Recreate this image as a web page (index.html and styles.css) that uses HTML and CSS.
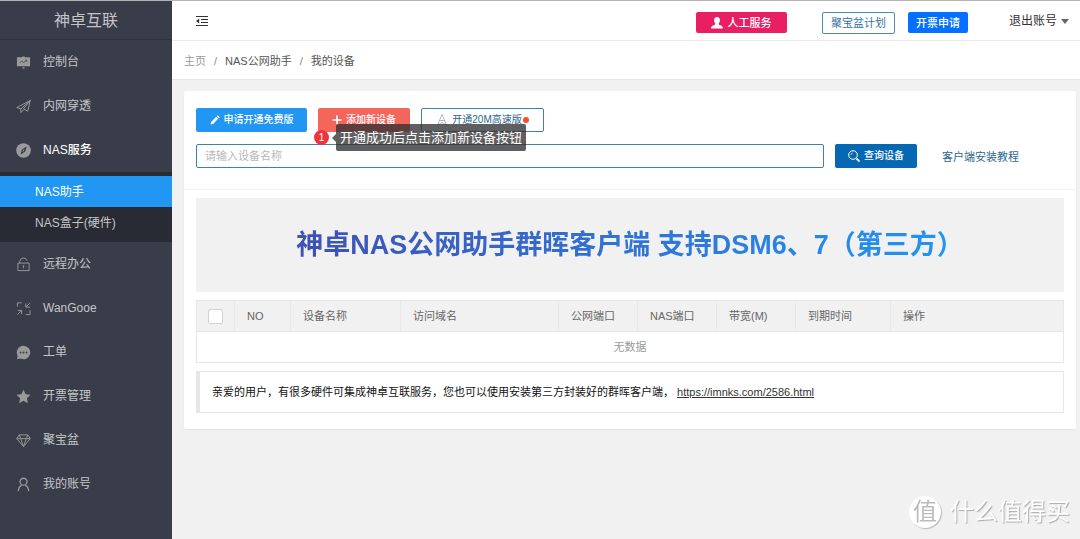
FILE: index.html
```html
<!DOCTYPE html>
<html lang="zh-CN">
<head>
<meta charset="utf-8">
<title>神卓互联</title>
<link rel="stylesheet" href="styles.css">
</head>
<body>
<div class="app">
  <aside class="sidebar">
    <div class="brand">神卓互联</div>
    <nav class="menu">
      <a class="menu-item" href="#"><svg class="icon" viewBox="0 0 16 16"><path fill="currentColor" d="M1 2.500h5L7 1.500h2l1 1h5v9.500H1z"/><path class="cut" d="M4 8.500l2-2 2 1.500 3.500-2.500M10 5.500h1.500V7"/><path fill="currentColor" d="M7 13h2v1.500H7z"/></svg>控制台</a>
      <a class="menu-item" href="#"><svg class="icon line" viewBox="0 0 16 16"><path d="M.8 9.200L15.200 1.500 12.500 13 8 10.500M.8 9.200l4.400 1.300L15.200 1.500 8 10.500M5.200 10.500v4L8 11.500"/></svg>内网穿透</a>
      <a class="menu-item open" href="#"><svg class="icon" viewBox="0 0 16 16"><circle cx="8" cy="8" r="7.800" fill="currentColor"/><path fill="#393d49" d="M11.500 3.500L9.800 9 4.800 12.500 6.300 7z"/><path fill="#9a9a9a" d="M8.800 6.600l-.3 1.800-1.400 1 .3-1.900z"/></svg>NAS服务</a>
      <div class="submenu">
        <a class="sub-item active" href="#">NAS助手</a>
        <a class="sub-item" href="#">NAS盒子(硬件)</a>
      </div>
      <a class="menu-item" href="#"><svg class="icon line" viewBox="0 0 16 16"><path d="M2 6.500h12v8H2zM4 6.500V5a4 4 0 0 1 7.800-1.200M8 9.500v2.500M7 9.500h2"/></svg>远程办公</a>
      <a class="menu-item" href="#"><svg class="icon line" viewBox="0 0 16 16"><path d="M1.500 6V2H6M15 10v4.500h-4.500M15 2l-4.500 4.500M10.500 2.500v4H15M1.500 14.500L6 10M2 10h4v4"/></svg>WanGooe</a>
      <a class="menu-item" href="#"><svg class="icon" viewBox="0 0 16 16"><path fill="currentColor" d="M8 .8a7.200 7.200 0 1 1-3.300 13.600L1 15.300l.8-3.700A7.200 7.200 0 0 1 8 .8z"/><g fill="#393d49"><circle cx="4.800" cy="8" r="1"/><circle cx="8" cy="8" r="1"/><circle cx="11.200" cy="8" r="1"/></g></svg>工单</a>
      <a class="menu-item" href="#"><svg class="icon" viewBox="0 0 16 16"><path fill="currentColor" d="M8 .8l2.200 4.800 5.200.6-3.800 3.600 1 5.400L8 12.600l-4.600 2.600 1-5.400L.6 6.200l5.200-.6z"/></svg>开票管理</a>
      <a class="menu-item" href="#"><svg class="icon line" viewBox="0 0 16 16"><path d="M3.500 2h9l2.700 4L8 14.500.8 6zM.8 6h14.400M3.500 2L5 6l3 8.500L11 6l1.500-4"/></svg>聚宝盆</a>
      <a class="menu-item" href="#"><svg class="icon line bold" viewBox="0 0 16 16"><circle cx="8" cy="5" r="3.700"/><path d="M2.500 15c0-3 1.500-5 3.500-6M13.500 15c0-3-1.500-5-3.500-6"/></svg>我的账号</a>
    </nav>
  </aside>

  <main class="main">
    <header class="topbar">
      <button class="fold" type="button" aria-label="折叠菜单"><svg viewBox="0 0 12 12"><path d="M0 1.500h12M5 4.500h7M5 7.500h7M0 10.500h12" fill="none" stroke="#333" stroke-width="1"/><path d="M3.200 3.500v5L0 6z" fill="#333"/></svg></button>
      <div class="actions">
        <button class="btn service" type="button"><svg class="btn-icon" viewBox="0 0 12 12"><path fill="currentColor" d="M6 0c2 0 3 1.400 3 3.200 0 1.500-.7 2.500-1.300 3.100-.2.900.2 1.400 1 1.700 2 .7 3 1.300 3.300 3.500H0c.3-2.200 1.300-2.800 3.300-3.500.8-.3 1.200-.8 1-1.700C3.700 5.700 3 4.700 3 3.200 3 1.400 4 0 6 0z"/></svg>人工服务</button>
        <button class="btn plan" type="button">聚宝盆计划</button>
        <button class="btn invoice" type="button">开票申请</button>
        <button class="account" type="button">退出账号<span class="caret"></span></button>
      </div>
    </header>
    <nav class="crumbs" aria-label="位置">
      <a class="home" href="#">主页</a><span class="sep">/</span><a href="#">NAS公网助手</a><span class="sep">/</span><span>我的设备</span>
    </nav>

    <section class="card">
      <div class="toolbar">
        <div class="row">
          <button class="btn free" type="button"><svg class="btn-icon small" viewBox="0 0 12 12"><path fill="currentColor" d="M.5 11.500l.8-3.200L7.400 2.200l2.400 2.400-6.100 6.100zM8.200 1.400l1-1 2.400 2.400-1 1z"/></svg>申请开通免费版</button>
          <div class="add-wrap">
            <button class="btn add" type="button"><svg class="btn-icon small" viewBox="0 0 12 12"><path d="M6 .5v11M.5 6h11" stroke="currentColor" stroke-width="2"/></svg>添加新设备</button>
            <div class="guide"><span class="step">1</span><span class="tip">开通成功后点击添加新设备按钮</span></div>
          </div>
          <button class="btn fast" type="button"><svg class="btn-icon" viewBox="0 0 12 12"><path d="M6 .5L1.500 11 6 8.500l4.500 2.500zM3.500 6.500h5" fill="none" stroke="#9aa5b8" stroke-width=".8"/></svg>开通20M高速版<span class="dot"></span></button>
        </div>
        <form class="row">
          <input class="search" type="text" placeholder="请输入设备名称" aria-label="设备名称">
          <button class="btn query" type="button"><svg class="btn-icon" viewBox="0 0 12 12"><g fill="none" stroke="currentColor"><circle cx="5" cy="5" r="4.300"/><path d="M3 5a2 2 0 0 1 1.500-2" stroke-width=".7"/><path d="M8.500 8.500l3 3" stroke-width="1.800"/></g></svg>查询设备</button>
          <a class="guide-link" href="#">客户端安装教程</a>
        </form>
      </div>
      <div class="content">
        <div class="banner"><h1>神卓NAS公网助手群晖客户端 支持DSM6、7（第三方）</h1></div>
        <table class="devices">
          <colgroup><col class="w-check"><col class="w-no"><col class="w-name"><col class="w-domain"><col class="w-port"><col class="w-port"><col class="w-port"><col class="w-date"><col></colgroup>
          <thead><tr><th class="check"><input type="checkbox" aria-label="全选"></th><th>NO</th><th>设备名称</th><th>访问域名</th><th>公网端口</th><th>NAS端口</th><th>带宽(M)</th><th>到期时间</th><th>操作</th></tr></thead>
          <tbody><tr><td colspan="9">无数据</td></tr></tbody>
        </table>
        <p class="notice">亲爱的用户，有很多硬件可集成神卓互联服务，您也可以使用安装第三方封装好的群晖客户端， <a href="https://imnks.com/2586.html">https://imnks.com/2586.html</a></p>
      </div>
    </section>
  </main>
</div>
<div class="watermark"><span class="seal">值</span><span>什么值得买</span></div>
</body>
</html>
```
FILE: styles.css
```css
* { box-sizing: border-box; }

body {
  margin: 0;
  background: #f1f1f1;
  color: #333;
  font: 11px/16px "Liberation Sans", "Noto Sans CJK SC", sans-serif;
}

a { color: inherit; text-decoration: none; }

button, input { font: inherit; }

.app {
  display: flex;
  min-height: 100vh;
  border-top: 1px solid #b5b5b8;
}

/* Sidebar */
.sidebar {
  flex: 0 0 172px;
  background: #393d49;
  color: #c4c5c9;
  font-size: 12px;
}

.brand {
  height: 39px;
  border-bottom: 1px solid #30333d;
  font-size: 16px;
  line-height: 40px;
  text-align: center;
}

.menu-item {
  display: flex;
  align-items: center;
  gap: 12px;
  height: 44px;
  padding-left: 16px;
}

.menu-item.open { color: #fff; font-weight: 500; }

.icon { width: 15px; height: 15px; color: #9a9a9a; }
.line path, .line circle { fill: none; stroke: currentColor; stroke-width: 1; }
.bold path, .bold circle { stroke-width: 1.4; }
.cut { fill: none; stroke: #4b4e58; stroke-width: 1; }

.submenu { padding: 4px 0; background: #282b33; }

.sub-item {
  display: block;
  height: 31px;
  padding-left: 35px;
  line-height: 32px;
}

.sub-item.active { background: #2196f3; color: #fff; }

/* Top bar */
.main { flex: 1; min-width: 0; }

.topbar {
  display: flex;
  justify-content: space-between;
  height: 40px;
  padding: 0 11px 0 24px;
  border-bottom: 1px solid #ebebeb;
  background: #fff;
}

.fold {
  padding: 0;
  border: 0;
  background: none;
}

.fold svg { display: block; width: 12px; height: 12px; }

.actions { display: flex; align-items: flex-start; padding-top: 11px; }

.btn {
  display: inline-flex;
  align-items: center;
  justify-content: center;
  gap: 4px;
  height: 24px;
  padding: 0;
  border: 0;
  border-radius: 2px;
  color: #fff;
  font-size: 10px;
  font-weight: 500;
  line-height: 16px;
  white-space: nowrap;
}

.btn-icon { width: 12px; height: 12px; }
.btn-icon.small { width: 10px; height: 10px; }

.service, .plan, .invoice { height: 21px; font-size: 11px; }
.service { width: 91px; margin-right: 35px; background: #e91e63; }
.plan { width: 73px; height: 22px; margin-right: 13px; border: 1px solid #4f8bb0; background: #fff; color: #3173a8; font-weight: 400; }
.invoice { width: 60px; margin-right: 41px; background: #0570ff; }

.account {
  display: flex;
  align-items: center;
  gap: 4px;
  padding: 0;
  border: 0;
  background: none;
  color: #333;
  font-size: 12px;
  line-height: 18px;
}

.caret { border: 4px solid transparent; border-top: 5px solid #666; border-bottom: 0; }

.crumbs {
  display: flex;
  height: 39px;
  padding-left: 12px;
  border-bottom: 1px solid #e6e6e6;
  background: #fff;
  color: #555;
  line-height: 40px;
}

.home { color: #999; }
.sep { margin: 0 8px; color: #888; }

/* Device card */
.card {
  margin: 11px 4px 0 12px;
  border-radius: 2px;
  background: #fff;
  box-shadow: 0 1px 2px rgba(0, 0, 0, 0.06);
}

.toolbar {
  display: grid;
  gap: 12px;
  padding: 17px 12px 19px;
  border-bottom: 1px solid #f2f2f2;
}

.row { display: flex; gap: 11px; }

.free { width: 111px; background: #2196f3; }
.add-wrap { position: relative; }
.add { width: 92px; background: #f3665c; }
.fast { width: 123px; border: 1px solid #3f81a8; background: #fff; color: #2b678f; font-weight: 400; }
.dot { width: 6px; height: 6px; margin-left: -3px; border-radius: 50%; background: #f4511e; }

.guide {
  position: absolute;
  top: 16px;
  left: -4px;
  display: flex;
  align-items: center;
  gap: 7px;
  white-space: nowrap;
}

.step {
  width: 15px;
  height: 15px;
  border-radius: 50%;
  background: #ef353c;
  color: #fff;
  font-size: 10px;
  line-height: 15px;
  text-align: center;
}

.tip {
  position: relative;
  padding: 0 4px;
  border-radius: 2px;
  background: rgba(50, 50, 50, 0.78);
  color: #fff;
  font-size: 13px;
  line-height: 27px;
}

.tip::before {
  content: "";
  position: absolute;
  top: 10px;
  left: -4px;
  border: 4px solid transparent;
  border-right-color: rgba(50, 50, 50, 0.78);
  border-left: 0;
}

.search {
  flex: 1;
  min-width: 0;
  height: 24px;
  padding: 0 8px;
  border: 1px solid #3f81a8;
  border-radius: 2px;
}

.search::placeholder { color: #b8b8b8; }
.query { width: 82px; background: #0668b3; }
.guide-link { margin: 0 45px 0 14px; color: #2b678f; line-height: 26px; }

.content { padding: 8px 12px 16px; }

.banner { padding: 27px 0; background: #f1f1f1; text-align: center; }

h1 {
  display: inline-block;
  margin: 0;
  background: linear-gradient(90deg, #3f51b5, #2196f3);
  background-clip: text;
  color: transparent;
  font-size: 27px;
  font-weight: 700;
  line-height: 40px;
  vertical-align: top;
  white-space: nowrap;
}

.devices {
  width: 100%;
  margin-top: 8px;
  border: 1px solid #e6e6e6;
  border-collapse: collapse;
  table-layout: fixed;
}

.w-check { width: 38px; }
.w-no { width: 56px; }
.w-name { width: 110px; }
.w-domain { width: 158px; }
.w-port { width: 79px; }
.w-date { width: 95px; }

.devices th, .devices td { height: 31px; padding: 0 12px; }

.devices th {
  border-right: 1px solid #e8e8e8;
  border-bottom: 1px solid #e6e6e6;
  background: #f1f1f1;
  color: #666;
  font-weight: 400;
  text-align: left;
}

.devices td { color: #999; text-align: center; }

.devices .check { padding: 0 11px; }

.check input {
  display: block;
  width: 15px;
  height: 15px;
  margin: 0;
  border: 1px solid #d2d2d2;
  border-radius: 2px;
  background: #fff;
  appearance: none;
}

.notice {
  margin: 8px 0 0;
  padding: 12px;
  border: 1px solid #e6e6e6;
  border-left-width: 4px;
  color: #111;
}

.notice a { color: #333; text-decoration: underline; }

/* Watermark */
.watermark {
  position: fixed;
  right: 10px;
  bottom: 10px;
  display: flex;
  align-items: center;
  gap: 9px;
  color: #fff;
  font-size: 24px;
  line-height: 34px;
  text-shadow: 1px 1px 1px #aaa;
}

.seal {
  width: 32px;
  height: 32px;
  border-radius: 50%;
  background: #fff;
  box-shadow: 1px 1px 1px #bbb;
  color: #bbb;
  line-height: 31px;
  text-align: center;
  text-shadow: none;
}
```
